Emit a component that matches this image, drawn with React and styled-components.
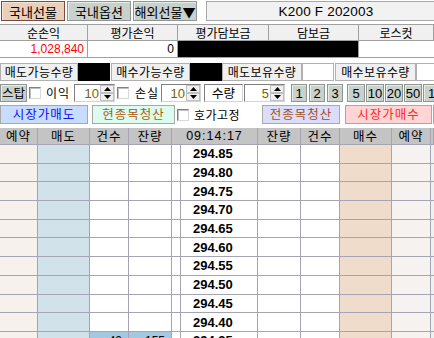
import React from "react";
import styled, { createGlobalStyle } from "styled-components";

const Global = createGlobalStyle`
  html, body { margin: 0; padding: 0; background: #ffffff; overflow: hidden; }
  body { font-family: "Noto Sans CJK KR", "Noto Sans", sans-serif; font-size: 12px; color: #000; }
  * { box-sizing: border-box; }
`;

const Page = styled.div`
  width: 434px;
  display: flex;
  flex-direction: column;
  white-space: nowrap;
`;

const TopBar = styled.div`
  display: flex;
  align-items: stretch;
  height: 22px;
  padding: 1px 0 1px 1px;
  overflow: hidden;
`;

const Tab = styled.div`
  flex: 0 0 64px;
  margin-right: 2px;
  display: flex;
  align-items: center;
  justify-content: center;
  font-size: 13px;
  line-height: 1;
  background: ${(p) => (p.$active ? "#e8d0bb" : "#c8d1cc")};
  border: 1px solid ${(p) => (p.$active ? "#7d4a3f" : "#8f9692")};
  box-shadow: inset 1px 1px 0 ${(p) => (p.$active ? "#f6e6d8" : "#e6ece8")};
`;

const Title = styled.div`
  flex: 0 0 240px;
  margin-left: 7px;
  display: flex;
  align-items: center;
  justify-content: center;
  background: #f2f2f2;
  border: 1px solid #a8a8a8;
  font-family: "Liberation Sans", Arial, sans-serif;
  font-size: 13.5px;
  letter-spacing: 0.2px;
`;

const Summary = styled.div`
  margin-top: 2px;
  display: grid;
  grid-template-columns: 88px 90px 91px 90px 75px;
  grid-template-rows: 16px 16px;
  border-top: 1px solid #a0a0a0;
  border-bottom: 1px solid #a0a0a0;
`;

const SumHead = styled.div`
  background: #f0f0f0;
  border-right: 1px solid #a0a0a0;
  border-bottom: 1px solid #a0a0a0;
  display: flex;
  align-items: center;
  justify-content: center;
  line-height: 1;
  &:last-of-type { border-right: none; }
`;

const SumVal = styled.div`
  background: ${(p) => (p.$black ? "#000" : "#fff")};
  border-right: ${(p) => (p.$noBorder ? "none" : "1px solid #a0a0a0")};
  display: flex;
  align-items: center;
  justify-content: flex-end;
  padding-right: 3px;
  color: ${(p) => p.$color || "#000"};
  font-family: "Liberation Sans", Arial, sans-serif;
  font-size: 12px;
  line-height: 1;
  grid-column: ${(p) => p.$span || "auto"};
`;

const QtyRow = styled.div`
  margin-top: 5px;
  height: 18px;
  display: flex;
  align-items: stretch;
  overflow: hidden;
`;

const QtyLabel = styled.div`
  flex: 0 0 ${(p) => p.$w}px;
  margin-left: ${(p) => p.$ml || 0}px;
  background: #f0f0f0;
  border: 1px solid #b0b0b0;
  display: flex;
  align-items: center;
  justify-content: center;
  letter-spacing: 0.4px;
  line-height: 1;
`;

const QtyBox = styled.div`
  flex: 0 0 ${(p) => p.$w}px;
  background: ${(p) => (p.$black ? "#000" : "#fff")};
  border: 1px solid ${(p) => (p.$black ? "#000" : "#b0b0b0")};
`;

const StopRow = styled.div`
  margin-top: 3px;
  height: 18px;
  display: flex;
  align-items: stretch;
  overflow: hidden;
`;

const GrayBtn = styled.div`
  flex: 0 0 ${(p) => p.$w}px;
  min-width: 0;
  margin-left: ${(p) => p.$ml || 0}px;
  background: #c8d1cc;
  border: 1px solid #8f9692;
  box-shadow: inset 1px 1px 0 #e6ece8;
  display: flex;
  align-items: center;
  justify-content: ${(p) => (p.$left ? "flex-start" : "center")};
  padding-left: ${(p) => (p.$left ? "4px" : "0")};
  font-family: ${(p) => (p.$num ? '"Liberation Sans", Arial, sans-serif' : "inherit")};
  font-size: ${(p) => (p.$num ? "13px" : "12.5px")};
  line-height: 1;
  overflow: hidden;
`;

const Check = styled.div`
  flex: 0 0 12px;
  height: 12px;
  align-self: center;
  margin-left: ${(p) => p.$ml || 0}px;
  background: #fff;
  border: 1px solid #808080;
  border-right-color: #d8d8d8;
  border-bottom-color: #d8d8d8;
  box-shadow: inset 1px 1px 0 #c0c0c0;
`;

const Text = styled.div`
  flex: 0 0 ${(p) => (p.$w ? `${p.$w}px` : "auto")};
  min-width: 0;
  margin-left: ${(p) => p.$ml || 0}px;
  display: flex;
  align-items: center;
  font-size: 12px;
  letter-spacing: ${(p) => p.$ls ?? 0}px;
  line-height: 1;
`;

const Spin = styled.div`
  flex: 0 0 ${(p) => p.$w}px;
  min-width: 0;
  margin-left: ${(p) => p.$ml || 0}px;
  display: flex;
  border: 1px solid #808080;
  border-right-color: #d4d4d4;
  border-bottom-color: #d4d4d4;
  background: #fff;
`;

const SpinVal = styled.div`
  flex: 1;
  min-width: 0;
  display: flex;
  align-items: center;
  justify-content: flex-end;
  padding-right: 1px;
  color: #7a6200;
  font-family: "Liberation Sans", Arial, sans-serif;
  font-size: 13px;
  line-height: 1;
`;

const SpinBtns = styled.div`
  flex: 0 0 14px;
  display: flex;
  flex-direction: column;
`;

const SpinBtn = styled.div`
  flex: 1;
  background: #f0f0f0;
  border: 1px solid #c0c0c0;
  display: flex;
  align-items: center;
  justify-content: center;
`;

const Field = styled.div`
  flex: 0 0 39px;
  min-width: 0;
  margin-left: 3px;
  border: 1px solid #808080;
  border-right-color: #d4d4d4;
  border-bottom-color: #d4d4d4;
  display: flex;
  align-items: center;
  justify-content: center;
  font-size: 12.5px;
  line-height: 1;
`;

const ActionRow = styled.div`
  margin-top: 3px;
  height: 19px;
  display: flex;
  align-items: stretch;
  overflow: hidden;
`;

const ActionBtn = styled.div`
  flex: 0 0 ${(p) => p.$w}px;
  min-width: 0;
  margin-left: ${(p) => p.$ml || 0}px;
  background: ${(p) => p.$bg};
  color: ${(p) => p.$fg};
  border: 1px solid #a8a8a8;
  display: flex;
  align-items: center;
  justify-content: center;
  font-size: 12.5px;
  letter-spacing: 1px;
  line-height: 1;
`;

const Table = styled.div`
  margin-top: 4px;
  display: grid;
  grid-template-columns: 38px 52px 39px 43px 9px 77px 43px 39px 52px 39px 3px;
  grid-template-rows: 17px;
  grid-auto-rows: 18.7px;
`;

const HeadCell = styled.div`
  grid-column: span ${(p) => p.$span || 1};
  background: #c4c4c4;
  border-right: 1px solid #a4a4b4;
  border-bottom: 1px solid #a4a4b4;
  display: flex;
  align-items: center;
  justify-content: center;
  font-size: 12.5px;
  letter-spacing: 1px;
  line-height: 1;
  font-family: ${(p) => (p.$num ? '"Liberation Sans", Arial, sans-serif' : "inherit")};
`;

const Cell = styled.div`
  background: ${(p) => p.$bg || "#fff"};
  border-right: 1px solid #a4a4b4;
  border-bottom: 1px solid #a4a4b4;
  display: flex;
  align-items: center;
  justify-content: flex-end;
  padding-right: 6px;
  font-family: "Liberation Sans", Arial, sans-serif;
  font-size: 12px;
  line-height: 1;
`;

const PriceCell = styled(Cell)`
  justify-content: flex-start;
  padding-left: 12px;
  font-weight: bold;
  font-size: 13px;
`;

const Arrow = ({ up }) => (
  <svg width="7" height="4" viewBox="0 0 7 4">
    <polygon points={up ? "0,4 7,4 3.5,0" : "0,0 7,0 3.5,4"} fill="#000" />
  </svg>
);

const Spinner = ({ w, ml, v }) => (
  <Spin $w={w} $ml={ml}>
    <SpinVal>{v}</SpinVal>
    <SpinBtns>
      <SpinBtn><Arrow up /></SpinBtn>
      <SpinBtn><Arrow /></SpinBtn>
    </SpinBtns>
  </Spin>
);

const prices = ["294.85","294.80","294.75","294.70","294.65","294.60","294.55","294.50","294.45","294.40","294.35"];

export default function App() {
  return (
    <Page>
      <Global />
      <TopBar>
        <Tab $active>국내선물</Tab>
        <Tab>국내옵션</Tab>
        <Tab>해외선물▼</Tab>
        <Title>K200 F 202003</Title>
      </TopBar>

      <Summary>
        <SumHead>순손익</SumHead>
        <SumHead>평가손익</SumHead>
        <SumHead>평가담보금</SumHead>
        <SumHead>담보금</SumHead>
        <SumHead>로스컷</SumHead>
        <SumVal $color="#ff0000">1,028,840</SumVal>
        <SumVal>0</SumVal>
        <SumVal $black $span="span 2" />
        <SumVal $noBorder />
      </Summary>

      <QtyRow>
        <QtyLabel $w={78}>매도가능수량</QtyLabel>
        <QtyBox $black $w={32} />
        <QtyLabel $w={79} $ml={1}>매수가능수량</QtyLabel>
        <QtyBox $black $w={32} />
        <QtyLabel $w={80}>매도보유수량</QtyLabel>
        <QtyBox $w={32} />
        <QtyLabel $w={81} $ml={1}>매수보유수량</QtyLabel>
        <QtyBox $w={20} />
      </QtyRow>

      <StopRow>
        <GrayBtn $w={27}>스탑</GrayBtn>
        <Check $ml={2} />
        <Text $ml={5} $w={23} $ls={1}>이익</Text>
        <Spinner w={41} ml={5} v="10" />
        <Check $ml={2} />
        <Text $ml={6} $w={22} $ls={1}>손실</Text>
        <Spinner w={40} ml={4} v="10" />
        <Field>수량</Field>
        <Spinner w={41} ml={1} v="5" />
        <GrayBtn $num $w={16} $ml={6}>1</GrayBtn>
        <GrayBtn $num $w={16} $ml={2}>2</GrayBtn>
        <GrayBtn $num $w={16} $ml={2}>3</GrayBtn>
        <GrayBtn $num $w={18} $ml={4}>5</GrayBtn>
        <GrayBtn $num $w={18} $ml={1}>10</GrayBtn>
        <GrayBtn $num $w={18} $ml={1}>20</GrayBtn>
        <GrayBtn $num $w={18} $ml={1}>50</GrayBtn>
        <GrayBtn $num $left $w={18} $ml={1}>100</GrayBtn>
      </StopRow>

      <ActionRow>
        <ActionBtn $w={88} $bg="#c8dcff" $fg="#1010f0">시장가매도</ActionBtn>
        <ActionBtn $w={83} $ml={4} $bg="#dcfcf0" $fg="#b05a10">현종목청산</ActionBtn>
        <Check $ml={2} />
        <Text $ml={5} $w={50} $ls={0.5}>호가고정</Text>
        <ActionBtn $w={78} $ml={18} $bg="#dcdcfc" $fg="#a0501a">전종목청산</ActionBtn>
        <ActionBtn $w={87} $ml={5} $bg="#ffd4d4" $fg="#ff2828">시장가매수</ActionBtn>
        <ActionBtn $w={6} $ml={1} $bg="#ffb030" $fg="#000" />
      </ActionRow>

      <Table>
        <HeadCell>예약</HeadCell>
        <HeadCell>매도</HeadCell>
        <HeadCell>건수</HeadCell>
        <HeadCell>잔량</HeadCell>
        <HeadCell $span={2} $num>09:14:17</HeadCell>
        <HeadCell>잔량</HeadCell>
        <HeadCell>건수</HeadCell>
        <HeadCell>매수</HeadCell>
        <HeadCell>예약</HeadCell>
        <HeadCell />
        {prices.map((p, i) => {
          const last = i === prices.length - 1;
          return (
            <React.Fragment key={p}>
              <Cell $bg="#f6f1ed" />
              <Cell $bg="#d2e2ea" />
              <Cell $bg={last ? "#a2c8e2" : "#fff"}>{last ? "42" : ""}</Cell>
              <Cell $bg={last ? "#a2c8e2" : "#fff"}>{last ? "155" : ""}</Cell>
              <Cell />
              <PriceCell>{p}</PriceCell>
              <Cell />
              <Cell />
              <Cell $bg="#f0dcca" />
              <Cell $bg="#f6f2ef" />
              <Cell $bg="#f0f0f0" />
            </React.Fragment>
          );
        })}
      </Table>
    </Page>
  );
}
